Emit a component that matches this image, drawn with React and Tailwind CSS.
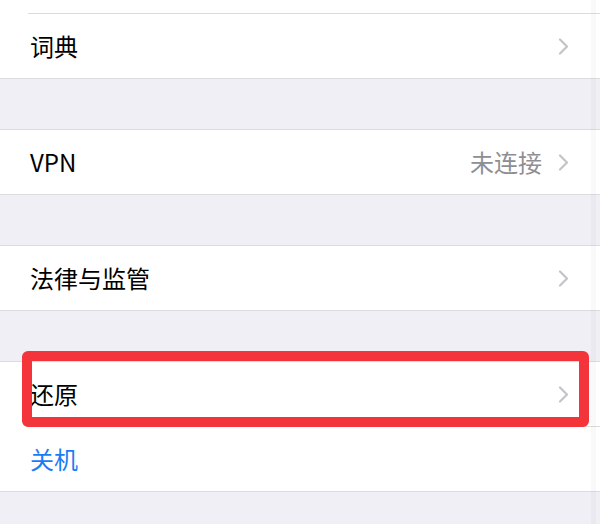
import React from 'react';

const font = { fontFamily: '"Noto Sans CJK SC", "Noto Sans", sans-serif' };

function Chevron() {
  return (
    <svg width="11" height="17" viewBox="0 0 11 17" fill="none" className="shrink-0">
      <path d="M2 1.5 L9 8.5 L2 15.5" stroke="#c4c4c8" strokeWidth="2.2" strokeLinecap="round" strokeLinejoin="round" />
    </svg>
  );
}

function Row({ label, detail, blue, chevron = true }) {
  return (
    <div className="h-[64px] flex items-center pl-[30px] pr-[31px] bg-white">
      <span className={`text-[24px] leading-none ${blue ? 'text-[#1a7cf4]' : 'text-black'}`}>{label}</span>
      <div className="flex-1" />
      {detail && <span className="text-[24px] leading-none text-[#8e8e93] mr-[16px]">{detail}</span>}
      {chevron && <Chevron />}
    </div>
  );
}

function Separator() {
  return (
    <div className="bg-white pl-[28px]">
      <div className="h-px bg-[#dcdce0]" />
    </div>
  );
}

function Group({ children }) {
  return <div className="bg-white border-y border-[#dcdce0]">{children}</div>;
}

export default function App() {
  return (
    <div className="relative w-[600px] h-[524px] overflow-hidden bg-[#f0eff5]" style={font}>
      <div className="bg-white border-b border-[#dcdce0]">
        <div className="h-[13px]" />
        <Separator />
        <Row label="词典" />
      </div>
      <div className="h-[50px]" />
      <Group>
        <Row label="VPN" detail="未连接" />
      </Group>
      <div className="h-[50px]" />
      <Group>
        <Row label="法律与监管" />
      </Group>
      <div className="h-[50px]" />
      <Group>
        <Row label="还原" />
        <Separator />
        <Row label="关机" blue chevron={false} />
      </Group>

      {/* highlight box */}
      <div className="absolute left-[22px] top-[351px] w-[567px] h-[76px] border-[10px] border-[#f4343b] rounded-[6px]" />
      {/* faint scroll strip */}
      <div className="absolute top-0 left-[591px] w-[5px] h-full bg-black/[0.025]" />
    </div>
  );
}
